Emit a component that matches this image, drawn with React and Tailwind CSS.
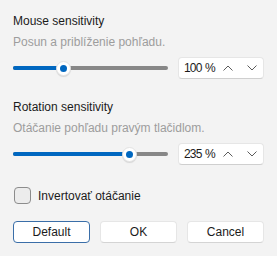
import { useState } from 'react'

const Chevron = ({ up }) => (
    <svg width="10" height="6" viewBox="0 0 10 6" className="block">
        <polyline
            points={up ? '0.5,5.5 5,1 9.5,5.5' : '0.5,0.5 5,5 9.5,0.5'}
            fill="none"
            stroke="#5c5c5c"
            strokeWidth="1"
        />
    </svg>
)

const Slider = ({ pos }) => (
    <div className="relative w-[155px] h-[22px] flex items-center">
        <div className="w-full h-[4px] rounded-full bg-[#878787] overflow-hidden">
            <div className="h-full bg-[#0067c0]" style={{ width: pos }} />
        </div>
        {/* thumb */}
        <div
            className="absolute top-[3.5px] w-[15px] h-[15px] -ml-[7.5px] rounded-full bg-white border border-[#e3e3e3] shadow-[0_1px_1px_rgba(0,0,0,0.12)] flex items-center justify-center"
            style={{ left: pos }}
        >
            <div className="w-[7px] h-[7px] rounded-full bg-[#0067c0]" />
        </div>
    </div>
)

const NumberBox = ({ value }) => (
    <div className="ml-[10px] w-[86px] h-[22px] flex items-center rounded-[4px] bg-white border border-[#e6e6e6] border-b-[#cfcfcf] pl-[5px]">
        <span className="w-[39px] whitespace-pre">
            <span className="tracking-[-0.8px]">{value}</span>
            <span> %</span>
        </span>
        <Chevron up />
        <span className="ml-[14px]">
            <Chevron />
        </span>
    </div>
)

const Section = ({ title, hint, value, pos, className = '' }) => (
    <div className={className}>
        <div>{title}</div>
        <div className="mt-[5px] text-[#9d9d9d]">{hint}</div>
        <div className="mt-[7px] flex items-center">
            <Slider pos={pos} />
            <NumberBox value={value} />
        </div>
    </div>
)

export default function App() {
    const [invert, setInvert] = useState(false)

    return (
        <div className="w-[277px] h-[256px] bg-[#f3f3f3] px-[13px] pt-[13px] font-['Liberation_Sans',Arial,sans-serif] text-[12px] leading-[16px] text-[#1b1b1b]">
            <Section title="Mouse sensitivity" hint="Posun a priblíženie pohľadu." value={100} pos={50} />
            <Section
                className="mt-[20px]"
                title="Rotation sensitivity"
                hint="Otáčanie pohľadu pravým tlačidlom."
                value={235}
                pos={116}
            />

            <label className="mt-[22px] ml-[1px] flex items-center gap-[7px] cursor-pointer">
                <span
                    onClick={() => setInvert(!invert)}
                    className="w-[17px] h-[17px] rounded-[4px] border border-[#8c8c8c] bg-[#ececec]"
                />
                <span>Invertovať otáčanie</span>
            </label>

            <div className="mt-[17px] flex gap-[10px]">
                <button className="w-[77px] h-[22px] rounded-[4px] bg-white border border-[#3a6ea8]">Default</button>
                <button className="w-[77px] h-[22px] rounded-[4px] bg-white border border-[#e6e6e6] border-b-[#d4d4d4]">OK</button>
                <button className="w-[77px] h-[22px] rounded-[4px] bg-white border border-[#e6e6e6] border-b-[#d4d4d4]">Cancel</button>
            </div>
        </div>
    )
}
